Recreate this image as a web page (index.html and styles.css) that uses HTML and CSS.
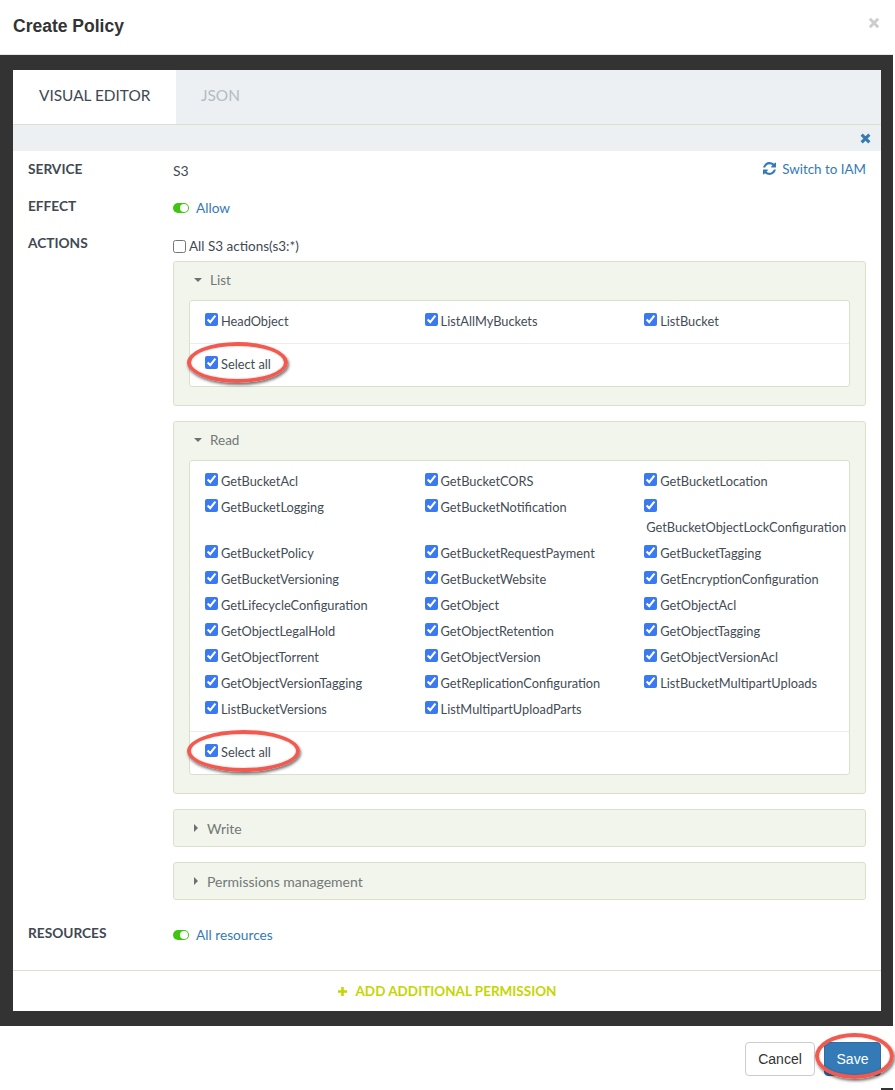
FILE: index.html
```html
<!DOCTYPE html>
<html lang="en">
<head>
<meta charset="utf-8">
<title>Create Policy</title>
<link rel="stylesheet" href="styles.css">
</head>
<body>
<div class="modal">
  <header class="modal-head">
    <h1>Create Policy</h1>
    <svg class="modal-x" viewBox="0 0 10 10"><path d="M1.5 1.5l7 7M8.5 1.5l-7 7"/></svg>
  </header>
  <main class="modal-body">
    <div class="editor">
      <div class="tabs">
        <div class="tab active">VISUAL EDITOR</div>
        <div class="tab">JSON</div>
      </div>
      <div class="strip">
        <svg class="strip-x" viewBox="0 0 10 10"><path d="M1.5 1.5l7 7M8.5 1.5l-7 7"/></svg>
      </div>
      <div class="form">
        <div class="row row-service">
          <div class="label">SERVICE</div>
          <div class="value">S3</div>
          <a class="switch">
            <svg viewBox="0 0 1536 1536"><path d="M1511 928q0 5-1 7-64 268-268 434.5t-478 166.5q-146 0-282.5-55t-243.5-157l-129 129q-19 19-45 19t-45-19-19-45v-448q0-26 19-45t45-19h448q26 0 45 19t19 45-19 45l-137 137q71 66 161 102t187 36q134 0 250-65t186-179q11-17 53-117 8-23 30-23h192q13 0 22.5 9.5t9.5 22.5zm25-800v448q0 26-19 45t-45 19h-448q-26 0-45-19t-19-45 19-45l138-138q-148-137-349-137-134 0-250 65t-186 179q-11 17-53 117-8 23-30 23h-199q-13 0-22.5-9.5t-9.5-22.5v-7q65-268 270-434.5t480-166.5q146 0 284 55.5t245 156.5l130-129q19-19 45-19t45 19 19 45z"/></svg>
            Switch to IAM
          </a>
        </div>
        <div class="row">
          <div class="label">EFFECT</div>
          <div class="toggle-line"><span class="toggle"></span><a>Allow</a></div>
        </div>
        <div class="row row-actions">
          <div class="label">ACTIONS</div>
          <div class="actions">
            <label class="all"><input type="checkbox">All S3 actions(s3:*)</label>

            <section class="panel">
              <div class="panel-head"><span class="caret-down"></span>List</div>
              <div class="inner">
                <div class="items">
                  <label class="item"><input type="checkbox" checked><span>HeadObject</span></label>
                  <label class="item"><input type="checkbox" checked><span>ListAllMyBuckets</span></label>
                  <label class="item"><input type="checkbox" checked><span>ListBucket</span></label>
                </div>
                <div class="select-all"><label class="item"><input type="checkbox" checked><span>Select all</span></label></div>
              </div>
            </section>

            <section class="panel">
              <div class="panel-head"><span class="caret-down"></span>Read</div>
              <div class="inner">
                <div class="items">
                  <label class="item"><input type="checkbox" checked><span>GetBucketAcl</span></label>
                  <label class="item"><input type="checkbox" checked><span>GetBucketCORS</span></label>
                  <label class="item"><input type="checkbox" checked><span>GetBucketLocation</span></label>
                  <label class="item"><input type="checkbox" checked><span>GetBucketLogging</span></label>
                  <label class="item"><input type="checkbox" checked><span>GetBucketNotification</span></label>
                  <label class="item"><input type="checkbox" checked><span>GetBucketObjectLockConfiguration</span></label>
                  <label class="item"><input type="checkbox" checked><span>GetBucketPolicy</span></label>
                  <label class="item"><input type="checkbox" checked><span>GetBucketRequestPayment</span></label>
                  <label class="item"><input type="checkbox" checked><span>GetBucketTagging</span></label>
                  <label class="item"><input type="checkbox" checked><span>GetBucketVersioning</span></label>
                  <label class="item"><input type="checkbox" checked><span>GetBucketWebsite</span></label>
                  <label class="item"><input type="checkbox" checked><span>GetEncryptionConfiguration</span></label>
                  <label class="item"><input type="checkbox" checked><span>GetLifecycleConfiguration</span></label>
                  <label class="item"><input type="checkbox" checked><span>GetObject</span></label>
                  <label class="item"><input type="checkbox" checked><span>GetObjectAcl</span></label>
                  <label class="item"><input type="checkbox" checked><span>GetObjectLegalHold</span></label>
                  <label class="item"><input type="checkbox" checked><span>GetObjectRetention</span></label>
                  <label class="item"><input type="checkbox" checked><span>GetObjectTagging</span></label>
                  <label class="item"><input type="checkbox" checked><span>GetObjectTorrent</span></label>
                  <label class="item"><input type="checkbox" checked><span>GetObjectVersion</span></label>
                  <label class="item"><input type="checkbox" checked><span>GetObjectVersionAcl</span></label>
                  <label class="item"><input type="checkbox" checked><span>GetObjectVersionTagging</span></label>
                  <label class="item"><input type="checkbox" checked><span>GetReplicationConfiguration</span></label>
                  <label class="item"><input type="checkbox" checked><span>ListBucketMultipartUploads</span></label>
                  <label class="item"><input type="checkbox" checked><span>ListBucketVersions</span></label>
                  <label class="item"><input type="checkbox" checked><span>ListMultipartUploadParts</span></label>
                </div>
                <div class="select-all"><label class="item"><input type="checkbox" checked><span>Select all</span></label></div>
              </div>
            </section>

            <section class="panel panel-closed">
              <div class="panel-head"><span class="caret-right"></span>Write</div>
            </section>
            <section class="panel panel-closed">
              <div class="panel-head"><span class="caret-right"></span>Permissions management</div>
            </section>
          </div>
        </div>
        <div class="row row-resources">
          <div class="label">RESOURCES</div>
          <div class="toggle-line"><span class="toggle"></span><a>All resources</a></div>
        </div>
      </div>
      <div class="add">
        <svg viewBox="0 0 12 12"><path d="M6 1v10M1 6h10"/></svg>
        ADD ADDITIONAL PERMISSION
      </div>
    </div>
  </main>
  <footer class="modal-foot">
    <button class="btn btn-cancel">Cancel</button>
    <button class="btn btn-save">Save</button>
  </footer>
  <div class="oval oval-list"></div>
  <div class="oval oval-read"></div>
  <div class="oval oval-save"></div>
</div>
</body>
</html>
```

FILE: styles.css
```css
* { box-sizing: border-box; }
html, body { margin: 0; background: #fff; }
body { font-family: "Lato", "Liberation Sans", sans-serif; font-size: 13px; color: #3f4953; }
a { color: #337ab7; }

.modal { position: relative; width: 895px; height: 1090px; overflow: hidden; display: flex; flex-direction: column; }
.modal::after { content: ""; position: absolute; left: 881px; bottom: 0; width: 12px; height: 2px; background: #333; }
.modal-head { width: 893px; height: 55px; flex: none; display: flex; justify-content: space-between; border-bottom: 1px solid #e5e5e5; padding: 16px 13px 0 13px; }
.modal-head h1 { margin: 0; font: bold 17.5px/20px "Liberation Sans", sans-serif; color: #333; }
.modal-x { width: 12px; height: 12px; margin-top: 1px; fill: none; stroke: #cdcdcd; stroke-width: 2.4; }

.modal-body { width: 893px; height: 971px; flex: none; background: #333; padding: 15px 12px 15px 13px; }
.editor { height: 941px; background: #fff; display: flex; flex-direction: column; }

.tabs { height: 55px; flex: none; display: flex; background: #ecf0f3; border-bottom: 1px solid #d9e1cd; }
.tab { padding: 0 25px; line-height: 50px; font-size: 15.4px; color: #b3bcc4; height: 54px; white-space: nowrap; }
.tab.active { width: 163px; padding: 0 0 0 26px; background: #fff; color: #3f4953; }
.strip { height: 26px; flex: none; background: #ecf0f3; display: flex; justify-content: flex-end; align-items: center; padding-right: 10px; }
.strip-x { width: 11px; height: 11px; fill: none; stroke: #337ab7; stroke-width: 2.8; }

.form { flex: 1; padding: 0 15px; }
.row { display: flex; min-height: 37px; }
.label { width: 145px; flex: none; padding-top: 11px; font-size: 13.7px; font-weight: 700; color: #3f4953; line-height: 14px; }
.row-service .value { flex: 1; padding-top: 12px; font-size: 14px; line-height: 16px; }
.switch { display: flex; align-items: flex-start; padding-top: 10px; line-height: 16px; font-size: 13.4px; }
.switch svg { width: 13px; height: 13px; margin: 1px 6px 0 0; fill: #337ab7; }
.toggle-line { display: flex; align-items: flex-start; padding-top: 12px; line-height: 16px; font-size: 13.7px; }
.toggle { position: relative; width: 16px; height: 10px; margin: 3px 7px 0 0; border-radius: 5px; background: #3fc70f; }
.toggle::after { content: ""; position: absolute; right: 1px; top: 1px; width: 8px; height: 8px; border-radius: 50%; background: #fff; }

.actions { flex: 1; min-width: 0; }
.all { display: flex; align-items: center; height: 18px; margin-top: 12px; font-size: 13.5px; line-height: 16px; }
.all input { margin: 0 3px 0 0; width: 13px; height: 13px; }

.panel { margin-top: 15px; background: #f1f5ec; border: 1px solid #d9e1cd; border-radius: 3px; padding: 0 15px 18px; }
.all + .panel { margin-top: 6px; }
.panel-closed { padding-bottom: 0; height: 38px; }
.panel-head { height: 38px; display: flex; align-items: center; padding: 0 0 2px 21px; position: relative; color: #737878; font-size: 13.5px; }
.panel-closed .panel-head { height: 36px; padding: 0 0 0 18px; font-size: 14px; }
.caret-down { position: absolute; left: 5px; top: 16px; border: 4px solid transparent; border-top-color: #6b7070; border-bottom: 0; }
.caret-right { position: absolute; left: 5px; top: 14px; border: 4px solid transparent; border-left-color: #6b7070; border-right: 0; }

.inner { background: #fff; border: 1px solid #d9e1cd; border-radius: 3px; overflow: hidden; }
.items { display: grid; grid-template-columns: 219.6px 219.6px 1fr; padding: 10px 0 6px 15px; }
.select-all { border-top: 1px solid #ecefe9; padding: 10px 0 0 15px; height: 43px; }
.item { display: block; padding: 0 0 6px 2px; line-height: 20px; font-size: 12.8px; color: #434c55; }
.item input { margin: 0 3px 0 -2px; width: 13px; height: 13px; accent-color: #3a79f2; vertical-align: 0; }
.item span { display: inline-block; white-space: nowrap; vertical-align: top; }

.row-resources { margin-top: 21px; }
.row-resources .label { padding-top: 0; margin-top: 5px; }
.row-resources .toggle-line { padding-top: 6px; }

.add { height: 41px; flex: none; border-top: 1px solid #d9e1cd; display: flex; align-items: center; justify-content: center; gap: 7px; color: #c4d600; font-size: 13.5px; font-weight: 700; }
.add svg { width: 11px; height: 11px; fill: none; stroke: #c4d600; stroke-width: 2.8; }

.modal-foot { width: 893px; flex: 1; display: flex; justify-content: flex-end; align-items: flex-start; gap: 9px; padding: 16px 12px 0 0; }
.btn { height: 34px; border-radius: 4px; font: 14px "Liberation Sans", sans-serif; border: 1px solid #ccc; background: #fff; color: #333; padding: 0; }
.btn-cancel { width: 70px; }
.btn-save { width: 57px; background: #337ab7; border-color: #2e6da4; color: #fff; }

.oval { position: absolute; border: 4px solid #f2594f; border-radius: 50%; box-shadow: 1px 2px 3px rgba(0,0,0,.55), inset 0 0 2px rgba(0,0,0,.25); }
.oval-list { left: 187px; top: 342px; width: 101px; height: 41px; }
.oval-read { left: 187px; top: 730px; width: 113px; height: 42px; }
.oval-save { left: 815px; top: 1033px; width: 79px; height: 46px; }
```
